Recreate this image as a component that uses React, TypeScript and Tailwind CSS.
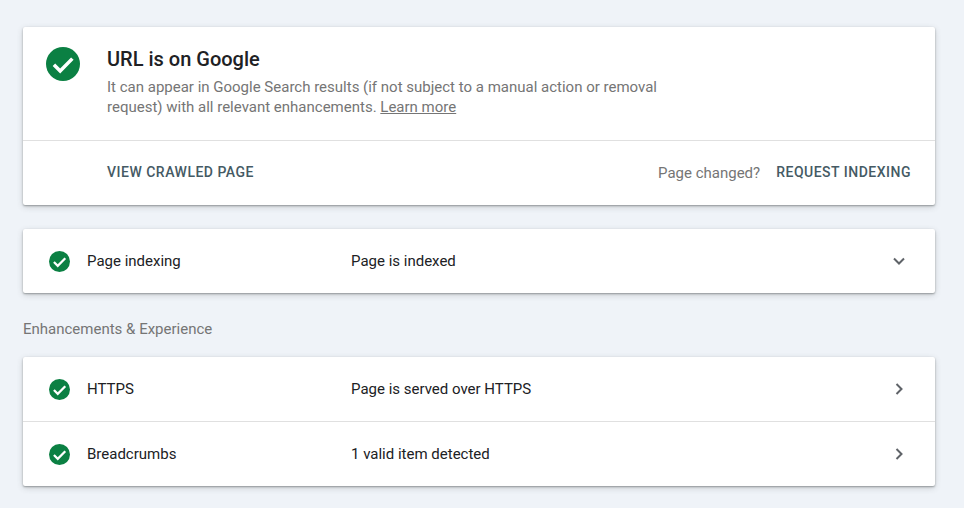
function CheckBadge({ size }: { size: number }) {
  return (
    <svg width={size} height={size} viewBox="0 0 24 24" className="block shrink-0">
      <circle cx="12" cy="12" r="12" fill="#0b8043" />
      <path d="M5.6 12.6 L10 17 L18.6 8.2" fill="none" stroke="#fff" strokeWidth="2.5" />
    </svg>
  );
}

function Chevron({ down }: { down?: boolean }) {
  return (
    <svg width="24" height="24" viewBox="0 0 24 24" className="block">
      <path
        d={down ? "M7 9.5 L12 14.5 L17 9.5" : "M9.5 7 L14.5 12 L9.5 17"}
        fill="none"
        stroke="#5f6368"
        strokeWidth="2"
      />
    </svg>
  );
}

function Row({ label, value, down, className }: { label: string; value: string; down?: boolean; className: string }) {
  return (
    <div className={`flex items-center pl-[26px] pr-6 ${className}`}>
      <CheckBadge size={21} />
      <div className="ml-[17px] w-[264px] text-[15px] text-[#202124]">{label}</div>
      <div className="flex-1 text-[15px] text-[#202124]">{value}</div>
      <Chevron down={down} />
    </div>
  );
}

const cardClass = "rounded-[2px] bg-white shadow-[0_1px_2px_rgba(60,64,67,0.45),0_2px_6px_rgba(60,64,67,0.2)]";

export default function App() {
  return (
    <div className="h-[508px] w-[964px] overflow-hidden bg-[#eff3f8] pl-[23px] pr-[29px] pt-[27px] font-['Roboto',sans-serif]">
      <div className={`h-[178px] ${cardClass}`}>
        <div className="flex h-[114px] border-b border-[#e0e0e0]">
          <div className="pl-[23px] pt-5">
            <CheckBadge size={34} />
          </div>
          <div className="ml-[27px] pt-[19px]">
            <h1 className="text-[20px] leading-[26px] font-medium text-[#202124]">URL is on Google</h1>
            <p className="mt-[5px] w-[570px] text-[15px] leading-5 text-[#757575]">
              It can appear in Google Search results (if not subject to a manual action or removal request) with all
              relevant enhancements. <span className="underline">Learn more</span>
            </p>
          </div>
        </div>
        <div className="flex h-[63px] items-center pl-[84px] pr-6">
          <span className="flex-1 text-[14px] font-medium tracking-[0.5px] text-[#455a64]">VIEW CRAWLED PAGE</span>
          <span className="mr-4 mt-[2px] text-[15px] text-[#757575]">Page changed?</span>
          <span className="text-[14px] font-medium tracking-[0.5px] text-[#455a64]">REQUEST INDEXING</span>
        </div>
      </div>

      <div className={`mt-6 ${cardClass}`}>
        <Row label="Page indexing" value="Page is indexed" down className="h-16" />
      </div>

      <div className="h-[64px] pt-[26px] text-[15px] leading-5 text-[#757575]">Enhancements &amp; Experience</div>

      <div className={cardClass}>
        <Row label="HTTPS" value="Page is served over HTTPS" className="h-[65px] border-b border-[#e0e0e0]" />
        <Row label="Breadcrumbs" value="1 valid item detected" className="h-16" />
      </div>
    </div>
  );
}
